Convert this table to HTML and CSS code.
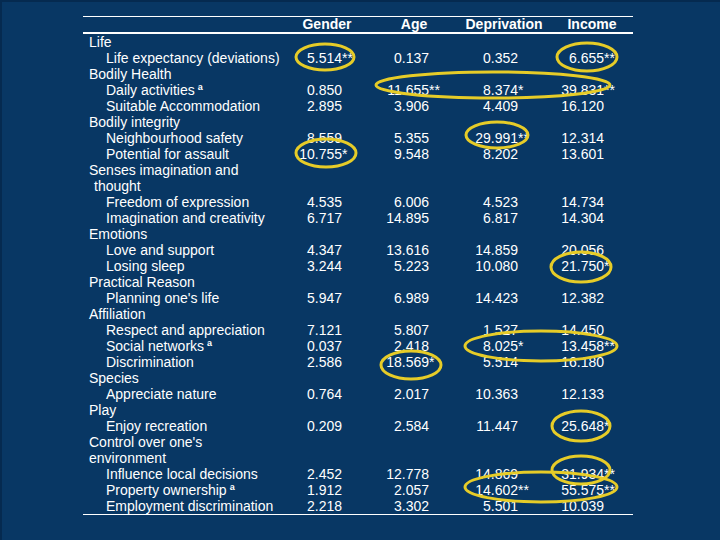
FILE: index.html
```html
<!DOCTYPE html>
<html>
<head>
<meta charset="utf-8">
<link rel="stylesheet" href="styles.css">
</head>
<body>
<div class="slide">
  <table class="results">
    <colgroup>
      <col class="c-label"><col class="c-gender"><col class="c-age"><col class="c-dep"><col class="c-inc">
    </colgroup>
    <thead>
      <tr><th></th><th class="h-gender">Gender</th><th class="h-age">Age</th><th class="h-dep">Deprivation</th><th class="h-inc">Income</th></tr>
    </thead>
    <tbody>
      <tr><td class="cat">Life</td><td></td><td></td><td></td><td></td></tr>
      <tr><td class="sub">Life expectancy (deviations)</td><td class="n g">5.514<span class="sig">**</span></td><td class="n a">0.137</td><td class="n d">0.352</td><td class="n i">6.655<span class="sig">**</span></td></tr>
      <tr><td class="cat">Bodily Health</td><td></td><td></td><td></td><td></td></tr>
      <tr><td class="sub">Daily activities<sup class="fn">a</sup></td><td class="n g">0.850</td><td class="n a">11.655<span class="sig">**</span></td><td class="n d">8.374<span class="sig">*</span></td><td class="n i">39.831<span class="sig">**</span></td></tr>
      <tr><td class="sub">Suitable Accommodation</td><td class="n g">2.895</td><td class="n a">3.906</td><td class="n d">4.409</td><td class="n i">16.120</td></tr>
      <tr><td class="cat">Bodily integrity</td><td></td><td></td><td></td><td></td></tr>
      <tr><td class="sub">Neighbourhood safety</td><td class="n g">8.559</td><td class="n a">5.355</td><td class="n d">29.991<span class="sig">**</span></td><td class="n i">12.314</td></tr>
      <tr><td class="sub">Potential for assault</td><td class="n g">10.755<span class="sig">*</span></td><td class="n a">9.548</td><td class="n d">8.202</td><td class="n i">13.601</td></tr>
      <tr><td class="cat">Senses imagination and</td><td></td><td></td><td></td><td></td></tr>
      <tr><td class="cat cont">thought</td><td></td><td></td><td></td><td></td></tr>
      <tr><td class="sub">Freedom of expression</td><td class="n g">4.535</td><td class="n a">6.006</td><td class="n d">4.523</td><td class="n i">14.734</td></tr>
      <tr><td class="sub">Imagination and creativity</td><td class="n g">6.717</td><td class="n a">14.895</td><td class="n d">6.817</td><td class="n i">14.304</td></tr>
      <tr><td class="cat">Emotions</td><td></td><td></td><td></td><td></td></tr>
      <tr><td class="sub">Love and support</td><td class="n g">4.347</td><td class="n a">13.616</td><td class="n d">14.859</td><td class="n i">20.056</td></tr>
      <tr><td class="sub">Losing sleep</td><td class="n g">3.244</td><td class="n a">5.223</td><td class="n d">10.080</td><td class="n i">21.750<span class="sig">*</span></td></tr>
      <tr><td class="cat">Practical Reason</td><td></td><td></td><td></td><td></td></tr>
      <tr><td class="sub">Planning one's life</td><td class="n g">5.947</td><td class="n a">6.989</td><td class="n d">14.423</td><td class="n i">12.382</td></tr>
      <tr><td class="cat">Affiliation</td><td></td><td></td><td></td><td></td></tr>
      <tr><td class="sub">Respect and appreciation</td><td class="n g">7.121</td><td class="n a">5.807</td><td class="n d">1.527</td><td class="n i">14.450</td></tr>
      <tr><td class="sub">Social networks<sup class="fn">a</sup></td><td class="n g">0.037</td><td class="n a">2.418</td><td class="n d">8.025<span class="sig">*</span></td><td class="n i">13.458<span class="sig">**</span></td></tr>
      <tr><td class="sub">Discrimination</td><td class="n g">2.586</td><td class="n a">18.569<span class="sig">*</span></td><td class="n d">5.514</td><td class="n i">16.180</td></tr>
      <tr><td class="cat">Species</td><td></td><td></td><td></td><td></td></tr>
      <tr><td class="sub">Appreciate nature</td><td class="n g">0.764</td><td class="n a">2.017</td><td class="n d">10.363</td><td class="n i">12.133</td></tr>
      <tr><td class="cat">Play</td><td></td><td></td><td></td><td></td></tr>
      <tr><td class="sub">Enjoy recreation</td><td class="n g">0.209</td><td class="n a">2.584</td><td class="n d">11.447</td><td class="n i">25.648<span class="sig">*</span></td></tr>
      <tr><td class="cat">Control over one's</td><td></td><td></td><td></td><td></td></tr>
      <tr><td class="cat">environment</td><td></td><td></td><td></td><td></td></tr>
      <tr><td class="sub">Influence local decisions</td><td class="n g">2.452</td><td class="n a">12.778</td><td class="n d">14.869</td><td class="n i">31.934<span class="sig">**</span></td></tr>
      <tr><td class="sub">Property ownership<sup class="fn">a</sup></td><td class="n g">1.912</td><td class="n a">2.057</td><td class="n d">14.602<span class="sig">**</span></td><td class="n i">55.575<span class="sig">**</span></td></tr>
      <tr><td class="sub">Employment discrimination</td><td class="n g">2.218</td><td class="n a">3.302</td><td class="n d">5.501</td><td class="n i">10.039</td></tr>
    </tbody>
  </table>

  <svg class="marks" width="720" height="540" viewBox="0 0 720 540">
    <g fill="none" stroke="#e6cc28" stroke-width="3">
      <ellipse cx="325" cy="57" rx="29" ry="13"/>
      <ellipse cx="587" cy="57" rx="30" ry="14"/>
      <ellipse cx="493" cy="85" rx="117" ry="13"/>
      <ellipse cx="497" cy="135" rx="31" ry="13"/>
      <ellipse cx="326" cy="153" rx="30" ry="14"/>
      <ellipse cx="581" cy="267" rx="30" ry="15"/>
      <ellipse cx="541" cy="346" rx="76" ry="15"/>
      <ellipse cx="411" cy="365" rx="30" ry="14"/>
      <ellipse cx="581" cy="426" rx="29" ry="15"/>
      <ellipse cx="581" cy="470" rx="29" ry="14"/>
      <ellipse cx="541" cy="487" rx="76" ry="15"/>
    </g>
  </svg>
</div>
</body>
</html>
```

FILE: styles.css
```css
html, body {
  margin: 0;
  padding: 0;
}

body {
  background: #083764;
  font-family: "Liberation Sans", Arial, sans-serif;
  color: #ffffff;
}

.slide {
  position: relative;
  width: 720px;
  height: 540px;
  overflow: hidden;
  background: #083764;
  box-shadow: inset 2px 2px 0 #052a50;
  padding-top: 16px;
  box-sizing: border-box;
}

.results {
  margin-left: 83px;
  width: 550px;
  border-collapse: collapse;
  table-layout: fixed;
  font-size: 14px;
  border-top: 1px solid #ffffff;
  border-bottom: 1px solid #ffffff;
}

.c-label { width: 200px; }
.c-gender { width: 88px; }
.c-age { width: 86px; }
.c-dep { width: 94px; }
.c-inc { width: 82px; }

.results th {
  height: 15px;
  line-height: 15px;
  padding: 0;
  font-weight: bold;
  text-align: center;
  border-bottom: 2px solid #ffffff;
  white-space: nowrap;
}

.results td {
  height: 16px;
  line-height: 16px;
  padding: 0;
  white-space: nowrap;
}

.cat { padding-left: 6px !important; }
.cat.cont { padding-left: 11px !important; }
.sub { padding-left: 23px !important; }

.n { text-align: right; }
.n.g { padding-right: 29px !important; }
.n.a { padding-right: 28px !important; }
.n.d { padding-right: 33px !important; }
.n.i { padding-right: 29px !important; }

.sig {
  display: inline-block;
  width: 0;
  text-align: left;
  white-space: nowrap;
}

.fn {
  font-size: 9px;
  line-height: 0;
  vertical-align: 5px;
  font-weight: bold;
  margin-left: 3px;
}

.marks {
  position: absolute;
  left: 0;
  top: 0;
  pointer-events: none;
}
```
